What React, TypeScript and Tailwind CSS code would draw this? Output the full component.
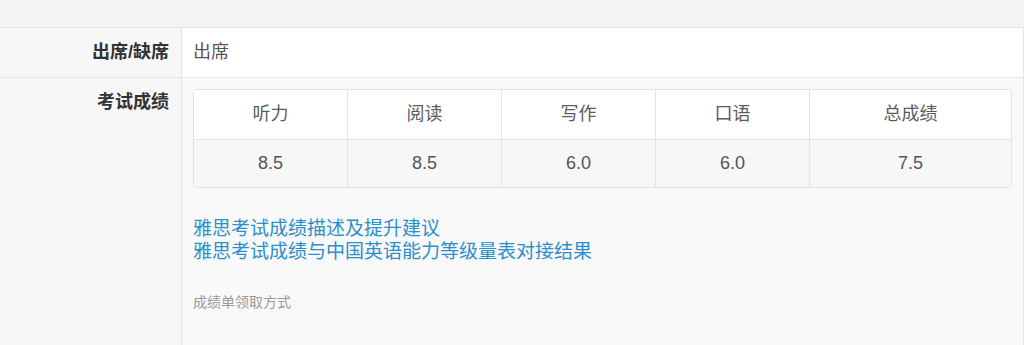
const scores = [
  { name: '听力', value: '8.5' },
  { name: '阅读', value: '8.5' },
  { name: '写作', value: '6.0' },
  { name: '口语', value: '6.0' },
  { name: '总成绩', value: '7.5' },
];

const font = { fontFamily: '"Liberation Sans", "Noto Sans CJK SC", sans-serif' };

export default function App() {
  return (
    <div className="w-[1024px] h-[345px] overflow-hidden bg-[#f7f7f7]" style={font}>
      <div className="h-[28px] bg-[#f3f3f3] border-b border-[#e4e4e4]" />

      <div className="border-r border-[#e6e6e6]">
        <div className="flex h-[50px] border-b border-[#e4e4e4]">
          <div className="w-[182px] shrink-0 border-r border-[#e4e4e4] flex items-center justify-end pr-[12px] text-[18px] font-bold text-[#333]">
            出席/缺席
          </div>
          <div className="flex-1 bg-white flex items-center pl-[11px] text-[18px] text-[#555]">出席</div>
        </div>

        <div className="flex h-[267px]">
          <div className="w-[182px] shrink-0 border-r border-[#e4e4e4] flex justify-end pr-[12px] pt-[13px] text-[18px] leading-[22px] font-bold text-[#333]">
            考试成绩
          </div>
          <div className="flex-1 bg-[#f9f9f9] pl-[11px] pt-[11px]">
            <div className="w-[819px] rounded-[4px] border border-[#e2e2e2] overflow-hidden">
              <div className="grid grid-cols-[154px_154px_154px_154px_1fr] h-[49px] bg-white">
                {scores.map((s, i) => (
                  <div
                    key={s.name}
                    className={`flex items-center justify-center text-[18px] text-[#5c5c5c] ${i < 4 ? 'border-r border-[#e4e4e4]' : ''}`}
                  >
                    {s.name}
                  </div>
                ))}
              </div>
              <div className="grid grid-cols-[154px_154px_154px_154px_1fr] h-[48px] bg-[#f7f7f7] border-t border-[#e4e4e4]">
                {scores.map((s, i) => (
                  <div
                    key={s.name}
                    className={`flex items-center justify-center text-[18px] text-[#555] ${i < 4 ? 'border-r border-[#e4e4e4]' : ''}`}
                  >
                    {s.value}
                  </div>
                ))}
              </div>
            </div>

            <div className="mt-[29px] flex flex-col text-[19px] leading-[23px] text-[#2b8fcb]">
              <a href="#">雅思考试成绩描述及提升建议</a>
              <a href="#">雅思考试成绩与中国英语能力等级量表对接结果</a>
            </div>

            <div className="mt-[31px] text-[14px] leading-[16px] text-[#9a9a9a]">成绩单领取方式</div>
          </div>
        </div>
      </div>
    </div>
  );
}
